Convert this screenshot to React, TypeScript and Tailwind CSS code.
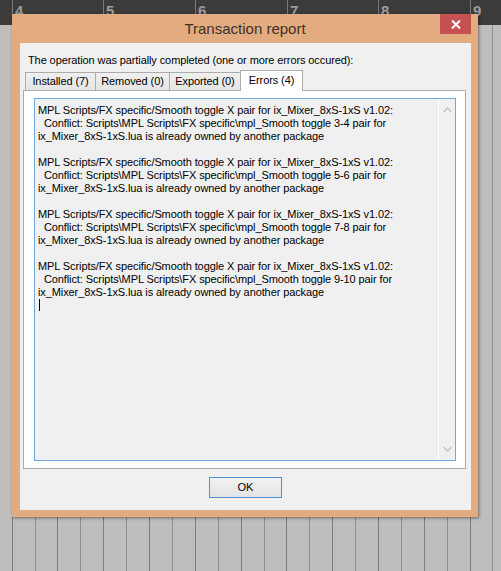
import React from "react";

const cols: { w: string; dark: boolean }[] = [
  { w: "w-[23px]", dark: true },
  { w: "w-[22px]", dark: false },
  { w: "w-[23px]", dark: true },
  { w: "w-[23px]", dark: false },
  { w: "w-[23px]", dark: true },
  { w: "w-[23px]", dark: false },
  { w: "w-[23px]", dark: true },
  { w: "w-[23px]", dark: false },
  { w: "w-[23px]", dark: true },
  { w: "w-[23px]", dark: false },
  { w: "w-[23px]", dark: true },
  { w: "w-[22px]", dark: false },
  { w: "w-[23px]", dark: true },
  { w: "w-[23px]", dark: false },
  { w: "w-[23px]", dark: true },
  { w: "w-[23px]", dark: false },
  { w: "w-[23px]", dark: true },
  { w: "w-[23px]", dark: false },
  { w: "w-[23px]", dark: true },
  { w: "w-[23px]", dark: false },
  { w: "w-[22px]", dark: true },
  { w: "w-[9px]", dark: false },
];

const ruler: { w: string; n: string }[] = [
  { w: "w-[91px]", n: "4" },
  { w: "w-[92px]", n: "5" },
  { w: "w-[92px]", n: "6" },
  { w: "w-[91px]", n: "7" },
  { w: "w-[92px]", n: "8" },
  { w: "w-[31px]", n: "9" },
];

const pairs = ["3-4", "5-6", "7-8", "9-10"];

export default function App() {
  return (
    <div
      className="relative w-[501px] h-[571px] overflow-hidden bg-[#bdbebd] flex flex-col"
      style={{ fontFamily: '"Liberation Sans", Arial, sans-serif' }}
    >
      {/* ruler */}
      <div className="h-[25px] bg-[#3b3b3b] flex shrink-0">
        <div className="w-[12px]" />
        {ruler.map((r) => (
          <div key={r.n} className={`${r.w} border-l border-[#7a7a7a] pl-[2px]`}>
            <span className="block text-[15px] leading-[16px] font-bold text-[#9c9c9c] pt-[3px]">{r.n}</span>
          </div>
        ))}
      </div>
      {/* column grid */}
      <div className="flex-1 flex">
        <div className="w-[12px]" />
        {cols.map((c, i) => (
          <div
            key={i}
            className={`${c.w} h-full border-l ${c.dark ? "border-[#7d7d7d]" : "border-[#8f8f8f]"}`}
          />
        ))}
      </div>

      {/* window */}
      <div className="absolute left-[12px] top-[14px] w-[466px] h-[503px] bg-[#e3ac80] shadow-[1px_1px_3px_rgba(0,0,0,0.45)] flex flex-col">
        <div className="h-[29px] flex items-center justify-center shrink-0 relative">
          <span className="text-[15px] leading-[18px] text-[#3d3128]">Transaction report</span>
          <div className="absolute right-[7px] top-0 w-[31px] h-[20px] bg-[#c75050] flex items-center justify-center">
            <svg width="10" height="9" viewBox="0 0 10 9">
              <path d="M1 0.5 L9 8.5 M9 0.5 L1 8.5" stroke="#ffffff" strokeWidth="2" />
            </svg>
          </div>
        </div>
        <div className="ml-[8px] mr-[7px] h-[467px] bg-[#f0f0f0] flex flex-col text-[11px] leading-[13px] text-black tracking-[-0.1px]">
          <div className="pl-[8px] pt-[11px] h-[24px]">
            The operation was partially completed (one or more errors occured):
          </div>
          <div className="mt-[3px] h-[20px] flex items-end pl-[5px]">
            <div className="w-[71px] h-[18px] border border-b-0 border-[#acacac] bg-gradient-to-b from-[#f0f0f0] to-[#e5e5e5] flex items-center justify-center">
              Installed (7)
            </div>
            <div className="-ml-px w-[75px] h-[18px] border border-b-0 border-[#acacac] bg-gradient-to-b from-[#f0f0f0] to-[#e5e5e5] flex items-center justify-center">
              Removed (0)
            </div>
            <div className="-ml-px w-[72px] h-[18px] border border-b-0 border-[#acacac] bg-gradient-to-b from-[#f0f0f0] to-[#e5e5e5] flex items-center justify-center">
              Exported (0)
            </div>
            <div className="-ml-px -mb-px relative z-10 w-[63px] h-[21px] border border-b-0 border-[#acacac] bg-white flex items-start justify-center pt-[3px]">
              Errors (4)
            </div>
          </div>
          <div className="ml-[3px] w-[443px] h-[379px] border border-[#acacac] bg-white pl-[10px] pr-[9px] pt-[7px] pb-[7px]">
            <div className="w-[422px] h-[363px] border border-[#73a6da] bg-[#f0f0f0] flex">
              <div className="flex-1 pl-[3px] pt-[5px] whitespace-pre">
                {pairs.map((p) => (
                  <div key={p}>
                    <div>MPL Scripts/FX specific/Smooth toggle X pair for ix_Mixer_8xS-1xS v1.02:</div>
                    <div>{`  Conflict: Scripts\\MPL Scripts\\FX specific\\mpl_Smooth toggle ${p} pair for`}</div>
                    <div>ix_Mixer_8xS-1xS.lua is already owned by another package</div>
                    <div className="h-[13px]" />
                  </div>
                ))}
                <div className="-mt-[13px] h-[13px] flex items-start pl-[1px]">
                  <div className="w-px h-[12px] bg-black" />
                </div>
              </div>
              <div className="w-[17px] border-l border-white flex flex-col justify-between items-center py-[8px]">
                <svg width="9" height="6" viewBox="0 0 9 6">
                  <path d="M0.5 5 L4.5 1 L8.5 5" stroke="#c2c2c2" strokeWidth="1.5" fill="none" />
                </svg>
                <svg width="9" height="6" viewBox="0 0 9 6">
                  <path d="M0.5 1 L4.5 5 L8.5 1" stroke="#c2c2c2" strokeWidth="1.5" fill="none" />
                </svg>
              </div>
            </div>
          </div>
          <div className="mt-[8px] flex justify-center">
            <div className="w-[73px] h-[21px] border border-[#4f8fd3] bg-gradient-to-b from-[#f2f2f2] to-[#e3e3e3] flex items-center justify-center tracking-normal">
              OK
            </div>
          </div>
        </div>
      </div>
    </div>
  );
}
